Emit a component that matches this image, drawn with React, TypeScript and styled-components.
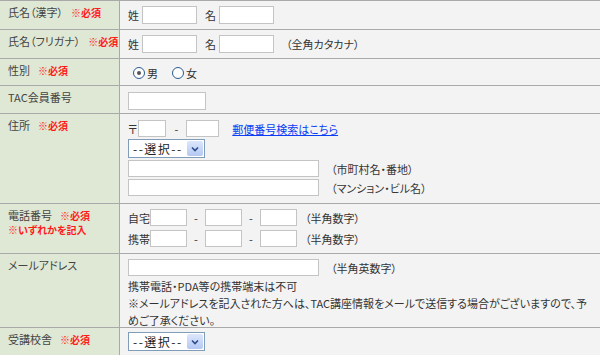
import React, { FC } from 'react'
import styled, { createGlobalStyle } from 'styled-components'

const Global = createGlobalStyle`
  body {
    margin: 0;
    background: #f3f3f3;
    font-family: "Noto Sans CJK JP", "Noto Sans", sans-serif;
    font-size: 11px;
    color: #333;
    font-feature-settings: "palt";
  }
`

const Req: FC = () => <S.Req>※必須</S.Req>

const Select: FC = () => (
  <S.Select>
    <S.SelectText>--選択--</S.SelectText>
    <S.SelectBtn>
      <svg width="8" height="6" viewBox="0 0 8 6">
        <path d="M1 1.5 L4 4.5 L7 1.5" fill="none" stroke="#2b4c8c" strokeWidth="1.6" />
      </svg>
    </S.SelectBtn>
  </S.Select>
)

const Radio: FC<{ checked?: boolean; label: string }> = ({ checked, label }) => (
  <S.Pair $gap={2}>
    <S.Radio>{checked && <S.Dot />}</S.Radio>
    <span>{label}</span>
  </S.Pair>
)

export default function App() {
  return (
    <>
      <Global />
      <S.Form>
        <S.Row $h={29}>
          <S.Label>氏名（漢字）<Req /></S.Label>
          <S.Cell $pt={4}>
            <S.Line $gap={8}>
              <S.Pair $gap={3}>姓<S.Input $w={55} /></S.Pair>
              <S.Pair $gap={3}>名<S.Input $w={55} /></S.Pair>
            </S.Line>
          </S.Cell>
        </S.Row>

        <S.Row $h={29}>
          <S.Label>氏名（フリガナ）<Req /></S.Label>
          <S.Cell $pt={4}>
            <S.Line $gap={8}>
              <S.Pair $gap={3}>姓<S.Input $w={55} /></S.Pair>
              <S.Pair $gap={3}>名<S.Input $w={55} /></S.Pair>
              <S.Note>（全角カタカナ）</S.Note>
            </S.Line>
          </S.Cell>
        </S.Row>

        <S.Row $h={27}>
          <S.Label>性別<Req /></S.Label>
          <S.Cell $pt={5}>
            <S.Line $gap={14} $pl={5}>
              <Radio checked label="男" />
              <Radio label="女" />
            </S.Line>
          </S.Cell>
        </S.Row>

        <S.Row $h={28}>
          <S.Label>TAC会員番号</S.Label>
          <S.Cell $pt={5}>
            <S.Input $w={78} />
          </S.Cell>
        </S.Row>

        <S.Row $h={90}>
          <S.Label>住所<Req /></S.Label>
          <S.Cell $pt={5}>
            <S.Stack $gap={2}>
              <S.Line $gap={8}>
                <S.Pair $gap={1}>〒<S.Input $w={28} $h={17} /></S.Pair>
                <span>-</span>
                <S.Input $w={33} $h={17} />
                <S.Link href="#" onClick={e => e.preventDefault()}>郵便番号検索はこちら</S.Link>
              </S.Line>
              <Select />
              <S.Line $gap={12}>
                <S.Input $w={191} $h={17} />
                <span>（市町村名・番地）</span>
              </S.Line>
              <S.Line $gap={12}>
                <S.Input $w={191} $h={17} />
                <span>（マンション・ビル名）</span>
              </S.Line>
            </S.Stack>
          </S.Cell>
        </S.Row>

        <S.Row $h={50}>
          <S.Label>
            電話番号<Req />
            <S.ReqLine>※いずれかを記入</S.ReqLine>
          </S.Label>
          <S.Cell $pt={4}>
            <S.Stack $gap={4}>
              {['自宅', '携帯'].map(k => (
                <S.Line key={k} $gap={0}>
                  <S.Kind>{k}</S.Kind>
                  <S.Input $w={37} $h={17} />
                  <S.Dash>-</S.Dash>
                  <S.Input $w={37} $h={17} />
                  <S.Dash>-</S.Dash>
                  <S.Input $w={37} $h={17} />
                  <S.Note $ml={8}>（半角数字）</S.Note>
                </S.Line>
              ))}
            </S.Stack>
          </S.Cell>
        </S.Row>

        <S.Row $h={74}>
          <S.Label>メールアドレス</S.Label>
          <S.Cell $pt={4}>
            <S.Line $gap={12}>
              <S.Input $w={191} $h={17} />
              <span>（半角英数字）</span>
            </S.Line>
            <S.Para>
              携帯電話・PDA等の携帯端末は不可<br />
              ※メールアドレスを記入された方へは、TAC講座情報をメールで送信する場合がございますので、予めご了承ください。
            </S.Para>
          </S.Cell>
        </S.Row>

        <S.Row $h={30}>
          <S.Label>受講校舎<Req /></S.Label>
          <S.Cell $pt={3}>
            <Select />
          </S.Cell>
        </S.Row>
      </S.Form>
    </>
  )
}

const S = {
  Form: styled.div`
    width: 600px;
    display: flex;
    flex-direction: column;
  `,
    Row: styled.div<{ $h: number }>`
      display: grid;
      grid-template-columns: 120px 1fr;
      height: ${p => p.$h}px;
      box-sizing: border-box;
      border-top: 1px solid #a9a9a9;
      box-shadow: inset 0 1px 0 #d2d2d2;
    `,
      Label: styled.div`
        background: #dfe8d5;
        border-right: 1px solid #a9a9a9;
        box-shadow: 1px 0 0 #d2d2d2;
        padding: 3px 0 0 8px;
        line-height: 16px;
        color: #444;
        white-space: nowrap;
      `,
        Req: styled.span`
          color: #ff1a1a;
          font-size: 10px;
          font-weight: bold;
          margin-left: 8px;
        `,
        ReqLine: styled.div`
          color: #ff1a1a;
          font-size: 10px;
          font-weight: bold;
          line-height: 14px;
          margin-top: -1px;
        `,
      Cell: styled.div<{ $pt: number }>`
        background: #f3f3f3;
        padding: ${p => p.$pt + 1}px 0 0 8px;
        line-height: 16px;
      `,
        Stack: styled.div<{ $gap: number }>`
          display: flex;
          flex-direction: column;
          align-items: flex-start;
          gap: ${p => p.$gap}px;
        `,
        Line: styled.div<{ $gap: number; $pl?: number }>`
          display: flex;
          align-items: center;
          gap: ${p => p.$gap}px;
          padding-left: ${p => p.$pl || 0}px;
          white-space: nowrap;
        `,
          Pair: styled.span<{ $gap: number }>`
            display: inline-flex;
            align-items: center;
            gap: ${p => p.$gap}px;
          `,
          Input: styled.span<{ $w: number; $h?: number }>`
            display: inline-block;
            box-sizing: border-box;
            width: ${p => p.$w}px;
            height: ${p => p.$h || 18}px;
            background: #fff;
            border: 1px solid #c4c4c4;
          `,
          Note: styled.span<{ $ml?: number }>`
            margin-left: ${p => p.$ml ?? 4}px;
          `,
          Kind: styled.span`
            width: 22px;
          `,
          Dash: styled.span`
            width: 18px;
            text-align: center;
          `,
          Link: styled.a`
            color: #0a3df5;
            text-decoration: underline;
            margin-left: 5px;
          `,
          Radio: styled.span`
            width: 12px;
            height: 12px;
            box-sizing: border-box;
            border-radius: 50%;
            border: 1px solid #2a5a93;
            background: #fdfdfd;
            display: inline-flex;
            align-items: center;
            justify-content: center;
          `,
            Dot: styled.span`
              width: 4px;
              height: 4px;
              border-radius: 50%;
              background: #555;
            `,
          Select: styled.span`
            display: inline-flex;
            align-items: center;
            box-sizing: border-box;
            width: 77px;
            height: 19px;
            background: #fff;
            border: 1px solid #7f9db9;
            padding: 1px;
          `,
            SelectText: styled.span`
              flex: 1;
              padding-left: 3px;
              font-size: 12px;
              letter-spacing: 1.5px;
              font-feature-settings: normal;
              color: #222;
            `,
            SelectBtn: styled.span`
              width: 16px;
              height: 15px;
              display: inline-flex;
              align-items: center;
              justify-content: center;
              background: linear-gradient(#dde7fb, #b4c8f4);
              border-radius: 2px;
            `,
        Para: styled.div`
          margin-top: 2px;
          width: 462px;
          line-height: 17px;
        `,
}
